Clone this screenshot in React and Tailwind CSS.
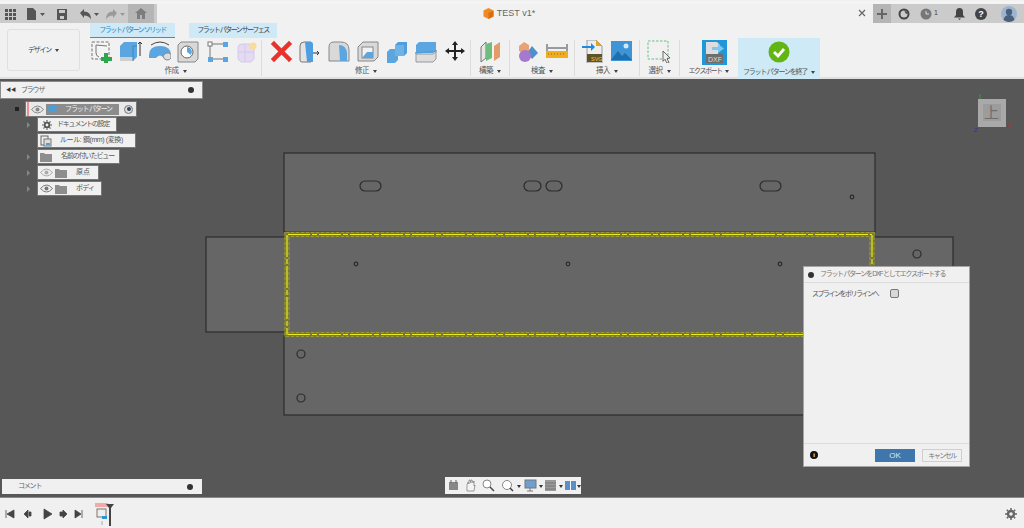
import React from 'react';

const Caret = () => <span className="inline-block ml-[4px] align-middle border-x-[2px] border-t-[3px] border-x-transparent border-t-[#444]" />;

// リボンのアイコン
const ribbonIcons = {
  sketch: <><rect x="2" y="2" width="17" height="17" fill="#f4f4f4" stroke="#777" strokeDasharray="3 1.5" /><path d="M6 5v8q0 3 3 4" fill="none" stroke="#777" /><path d="M6 5l11 1" stroke="#777" /><path d="M14 13h4v4h4v4h-4v2h-4v-2h-3v-4h3z" fill="#2aa84a" /></>,
  box: <><path d="M1 6l4-4h13v15l-4 4H1z" fill="#5ba6e0" /><path d="M1 17h13v4H1z" fill="#cfcfcf" /><path d="M14 6h4M14 6v15" stroke="#3f86c0" /><path d="M21 16V2m-2 2l2-2 2 2" stroke="#333" fill="none" /></>,
  bend: <><path d="M1 15q0-9 11-9t11 9v3h-7q-4-5-8 0H1z" fill="#5ba6e0" /><path d="M15 16q3-5 8-2v4q-1 2-4 2t-4-4z" fill="#ddd" stroke="#888" /><path d="M3 5q9-6 18 0" fill="none" stroke="#444" /></>,
  hole: <><path d="M1 5l3-3h17v17l-3 3H1z" fill="#d8d8d8" stroke="#888" /><circle cx="10" cy="12" r="6" fill="#fff" stroke="#666" /><path d="M10 12V7a5 5 0 0 1 4 8z" fill="#5ba6e0" /></>,
  nodes: <><path d="M5 4h13M5 19h13M4 5v13" stroke="#777" /><rect x="2" y="2" width="4" height="4" fill="#fff" stroke="#777" /><rect x="17" y="2" width="5" height="5" fill="#5ba6e0" /><rect x="2" y="17" width="5" height="5" fill="#5ba6e0" /><rect x="17" y="17" width="5" height="5" fill="#5ba6e0" /></>,
  form: <><path d="M3 8q0-4 4-4h8l4 4v11l-3 3H6l-3-3z" fill="#e4daf2" stroke="#d5c9ea" /><path d="M10 4v18M3 12h16" stroke="#d5c9ea" /><circle cx="18" cy="6" r="3.500" fill="#f7dc9a" /></>,
  del: <path d="M4 4l15 15M19 4L4 19" stroke="#e8322c" strokeWidth="4.500" strokeLinecap="square" />,
  press: <><path d="M1 6q0-4 4-4h7v20H3q-2 0-2-2z" fill="#e4e4e4" stroke="#777" /><path d="M6 2h6q2 0 2 2v18H8z" fill="#4f9fe0" /><path d="M14 13h6m-2-2l2 2-2 2" stroke="#333" fill="none" /></>,
  fillet: <><path d="M1 21V7q0-5 5-5h7q8 0 8 8v11z" fill="#d9d9d9" stroke="#888" /><path d="M11 5q7 0 8 8v8h-7z" fill="#5ba6e0" /></>,
  shell: <><path d="M1 7l5-5h15v15l-4 4H1z" fill="#d9d9d9" stroke="#888" /><rect x="5" y="7" width="11" height="11" fill="#f2f2f2" stroke="#888" /><path d="M5 18l5-6h6v6z" fill="#5ba6e0" /></>,
  combine: <><path d="M1 12l3-3h8v11l-3 3H1z" fill="#5ba6e0" /><path d="M9 5l3-3h9v11l-3 3H9z" fill="#4f9fe0" /><path d="M9 5h9v11H9z" fill="#6eb2e6" /></>,
  split: <><path d="M1 5l3-3h17v9l-3 2H1z" fill="#5ba6e0" /><path d="M1 14h17l3-2v7l-3 3H1z" fill="#ddd" stroke="#999" /><path d="M0 13l22-2" stroke="#4f9fe0" strokeWidth="1.400" /></>,
  move: <path d="M11 1l3 4h-2v5h5V8l4 3-4 3v-2h-5v5h2l-3 4-3-4h2v-5H5v2l-4-3 4-3v2h5V5H8z" fill="#222" />,
  plane: <><path d="M2 7l5-5v16l-5 4z" fill="#e6e6e6" stroke="#777" /><path d="M7 4l6-2v16l-6 3z" fill="#6fbd7d" /><path d="M15 6l6-4v15l-6 4z" fill="#e59a6a" /></>,
  inspect: <><path d="M2 6l5-4 5 3v6l-5 3-5-3z" fill="#e9a273" /><path d="M15 6l6 7-6 6-5-6z" fill="#4f8fcb" /><circle cx="8" cy="16" r="6" fill="#a579cf" /></>,
  measure: <><path d="M1 4v8M21 4v8M2 8h18" stroke="#444" /><rect x="0" y="11" width="22" height="7" fill="#f0ad1e" /><path d="M2 14h18" stroke="#8b6a10" strokeDasharray="1 2" /></>,
  svg: <><path d="M5 0h9l6 6v17H5z" fill="#eee" stroke="#999" /><path d="M14 0l6 6h-6z" fill="#e8a31a" /><rect x="5" y="14" width="15" height="8" fill="#5f5321" /><text x="9" y="21" fontSize="5.500" fill="#eec35a">SVG</text><path d="M0 6h9V3l4 4-4 4V8H0z" fill="#1f8ae0" /></>,
  image: <><rect x="0" y="1" width="21" height="20" fill="#3f94d6" /><circle cx="15" cy="6" r="2.500" fill="#cfe9f8" /><path d="M0 20l7-9 4 5 3-3 7 7z" fill="#1d6fae" /></>,
  select: <><rect x="1" y="1" width="20" height="18" fill="none" stroke="#67c184" strokeDasharray="2.500 1.500" /><path d="M16 11l7 7-3 .5 2 4-2 .8-2-4-2 2z" fill="#eee" stroke="#333" strokeWidth=".7" /></>,
};

const ribbonGroups = [
  { label: '作成', width: 172, pad: 'pl-[0px]', gap: 'gap-[6px]', icons: ['sketch', 'box', 'bend', 'hole', 'nodes', 'form'] },
  { label: '修正', width: 209, pad: 'pl-[8px]', gap: 'gap-[6px]', icons: ['del', 'press', 'fillet', 'shell', 'combine', 'split', 'move'] },
  { label: '構築', width: 39, pad: 'pl-[8px]', gap: 'gap-0', icons: ['plane'] },
  { label: '検査', width: 65, pad: 'pl-[7px]', gap: 'gap-[6px]', icons: ['inspect', 'measure'] },
  { label: '挿入', width: 65, pad: 'pl-[7px]', gap: 'gap-[6px]', icons: ['svg', 'image'] },
  { label: '選択', width: 40, pad: 'pl-[7px]', gap: 'gap-0', icons: ['select'] },
];

const RibbonGroup = ({ group }) => (
  <div className="flex flex-col h-[36px] border-r border-[#dcdcdc] shrink-0" style={{ width: group.width }}>
    <div className={`flex items-start h-[25px] ${group.pad} ${group.gap}`}>
      {group.icons.map((name) => (
        <svg key={name} width="23" height="23" viewBox="0 0 23 23" className="shrink-0 tracking-normal">{ribbonIcons[name]}</svg>
      ))}
    </div>
    <div className="text-[7.500px] tracking-[-0.5px] leading-[11px] text-center text-[#555] whitespace-nowrap">{group.label}<Caret /></div>
  </div>
);

const Eye = ({ color = '#777' }) => (
  <svg width="13" height="9" viewBox="0 0 13 9"><path d="M.5 4.500Q6.500-2.500 12.500 4.500 6.500 11.500.5 4.500z" fill="none" stroke={color} /><circle cx="6.500" cy="4.500" r="2" fill={color} /></svg>
);

const Folder = () => (
  <svg width="12" height="10" viewBox="0 0 12 10"><path d="M0 1h4l1 1h7v8H0z" fill="#8d8d8d" /></svg>
);

const Expander = () => <span className="w-0 h-0 border-y-[3px] border-l-[3px] border-y-transparent border-l-[#888]" />;

const TreeRow = ({ expander = true, width, children }) => (
  <div className="flex items-center h-[13px]">
    <div className="w-[12px] flex justify-start pl-[1px]">{expander && <Expander />}</div>
    <div className="flex items-center h-[13px] bg-[#f0f0f0] text-[7px] text-[#555] whitespace-nowrap shadow-[0_0_0_1px_#777]" style={{ width }}>{children}</div>
  </div>
);

const Canvas = () => (
  <svg viewBox="0 79 1024 418" className="absolute inset-0 w-full h-full tracking-normal">
    <g fill="#666666" stroke="#2c2c2c" strokeWidth="1.200">
      <rect x="206" y="237" width="80" height="95" />
      <rect x="870" y="237" width="83" height="95" />
      <rect x="284" y="153" width="591" height="79" />
      <rect x="284" y="336" width="591" height="79" />
    </g>
    <rect x="286" y="233" width="587" height="102" fill="#666666" />
    <g fill="none" stroke="#77773c" strokeWidth="5.500">
      <path d="M286 234.500H875M286 334.500H875M287 232V337M872 232V337" />
    </g>
    <g fill="none" stroke="#98983a" strokeWidth="1" strokeDasharray="3 2">
      <path d="M286 232.500H875M286 236.500H875M286 332.500H875M286 336.500H875" />
      <path d="M285 232V337M289 232V337M870 232V337M874 232V337" />
    </g>
    <g fill="none" stroke="#eaea1e" strokeWidth="1.200" strokeDasharray="22 2 5 2">
      <path d="M288 234.500H872M288 334.500H872" />
      <path d="M287 235V335M872 235V335" />
    </g>
    <g fill="none" stroke="#2c2c2c" strokeWidth="1.200">
      <rect x="360" y="181" width="21" height="10" rx="5" />
      <rect x="524" y="181" width="17" height="10" rx="5" />
      <rect x="546" y="181" width="16" height="10" rx="5" />
      <rect x="760" y="181" width="21" height="10" rx="5" />
      <circle cx="852" cy="197" r="1.800" />
      <circle cx="356" cy="264" r="1.800" />
      <circle cx="568" cy="264" r="1.800" />
      <circle cx="780" cy="264" r="1.800" />
      <circle cx="917" cy="254" r="4" />
      <circle cx="301" cy="354" r="4" />
      <circle cx="301" cy="398" r="4" />
    </g>
    <path d="M980 100V94" stroke="#3c9a3c" />
    <rect x="978" y="99" width="28" height="28" fill="#a9a9a9" />
    <rect x="983" y="104" width="18" height="17" fill="#9c9c9c" />
    <text x="984" y="118" fontSize="15" fill="#6e6e6e" fontFamily="'Noto Sans CJK JP'">上</text>
    <text x="1007" y="128" fontSize="6" fill="#b03030" fontFamily="'Liberation Sans'">X</text>
    <text x="974" y="132" fontSize="6" fill="#3030b0" fontFamily="'Liberation Sans'">Z</text>
  </svg>
);

const App = () => {
  return (
    <div className="w-[1024px] h-[528px] overflow-hidden flex flex-col bg-[#f0f0f0] tracking-[-1.5px] font-['Liberation_Sans','Noto_Sans_CJK_JP',sans-serif]">
      {/* タイトルバー */}
      <div className="h-[22px] mt-[1px] pt-[3px] bg-[#cbcbcb] shadow-[inset_0_3px_0_#f4f4f4] flex items-stretch shrink-0">
        <div className="w-[128px] flex items-center relative">
          <svg width="124" height="14" viewBox="0 0 124 14" className="ml-[4px]">
            <path d="M1 2h3v3H1zM5 2h3v3H5zM9 2h3v3H9zM1 6h3v3H1zM5 6h3v3H5zM9 6h3v3H9zM1 10h3v3H1zM5 10h3v3H5zM9 10h3v3H9z" fill="#555" />
            <path d="M23 1h6l3 3v9h-9z" fill="#555" /><path d="M36 6h5l-2.500 3z" fill="#555" />
            <path d="M53 2h10v11H53z" fill="#555" /><path d="M55 3h6v3h-6zM56 9h4v3h-4z" fill="#cbcbcb" />
            <path d="M76 6l4-4v2.500q7 0 7 8-2-4-7-4V11z" fill="#555" /><path d="M90 6h5l-2.500 3z" fill="#555" />
            <path d="M115 6l-4-4v2.500q-7 0-7 8 2-4 7-4V11z" fill="#999" transform="translate(-2 0)" /><path d="M116 6h5l-2.500 3z" fill="#999" />
          </svg>
        </div>
        <div className="w-[26px] bg-[#b5b5b5] flex items-center justify-center">
          <svg width="12" height="11" viewBox="0 0 12 11"><path d="M6 0l6 5h-2v6H7V7H5v4H2V5H0z" fill="#7d7d7d" /></svg>
        </div>
        <div className="w-[3px]" />
        <div className="w-[716px] bg-[#f1f1f1] flex items-center justify-center relative text-[9px] tracking-normal text-[#666]">
          <div className="flex items-center gap-[3px] -ml-[12px]">
            <svg width="11" height="11" viewBox="0 0 11 11"><path d="M5.500 0L10.500 2.500V8.500L5.500 11 .5 8.500V2.500z" fill="#f08a24" /><path d="M5.500 5L10.500 2.500V8.500L5.500 11z" fill="#d96f10" /></svg>
            <span>TEST v1*</span>
          </div>
          <svg width="8" height="8" viewBox="0 0 8 8" className="absolute right-[7px] top-[5px]"><path d="M1 1l6 6M7 1L1 7" stroke="#666" strokeWidth="1.200" /></svg>
        </div>
        <div className="w-[18px] bg-[#b5b5b5] flex items-center justify-center">
          <svg width="10" height="10" viewBox="0 0 10 10"><path d="M5 0v10M0 5h10" stroke="#666" strokeWidth="2" /></svg>
        </div>
        <div className="flex-1 flex items-center pl-[7px]">
          <svg width="12" height="12" viewBox="0 0 12 12"><circle cx="6" cy="6" r="4.500" fill="none" stroke="#444" strokeWidth="2" /><path d="M6 2l4 3-2 1z" fill="#444" /></svg>
          <svg width="12" height="12" viewBox="0 0 12 12" className="ml-[10px]"><circle cx="6" cy="6" r="5.500" fill="#777" /><path d="M6 3v3h3" stroke="#ddd" fill="none" /></svg>
          <span className="text-[7px] tracking-normal text-[#444] ml-[2px]">1</span>
          <svg width="11" height="12" viewBox="0 0 11 12" className="ml-[16px]"><path d="M5.500 0q3.500 0 3.500 4v3l2 2.500H0L2 7V4q0-4 3.500-4zM4 10.500h3L5.500 12z" fill="#444" /></svg>
          <div className="ml-[10px] w-[12px] h-[12px] rounded-full bg-[#444] text-white text-[9px] tracking-normal font-bold leading-[12px] text-center">?</div>
          <svg width="16" height="16" viewBox="0 0 16 16" className="ml-[14px]"><circle cx="8" cy="8" r="8" fill="#9db4cf" /><circle cx="8" cy="6" r="3.200" fill="#4a5f7c" /><path d="M2.500 14q1-5 5.500-5t5.500 5q-5.500 4-11 0z" fill="#4a5f7c" /></svg>
        </div>
      </div>

      {/* リボン */}
      <div className="h-[56px] shrink-0 flex relative bg-[#f1f1f1] border-b-[2px] border-[#e0e0e0]">
        <div className="w-[73px] h-[42px] ml-[7px] mt-[6px] border border-[#dfdfdf] rounded-[3px] flex items-center justify-center text-[7px] tracking-[-1.2px] text-[#444] shrink-0">デザイン<Caret /></div>
        <div className="ml-[10px] flex flex-col">
          <div className="flex h-[15px] text-[7px] leading-[14px] text-[#444] whitespace-nowrap">
            <div className="w-[85px] text-center text-[#2c86c4] bg-[#cfe9f6] border-b-[1.500px] border-[#2d93d6]">フラット パターン ソリッド</div>
            <div className="w-[88px] ml-[14px] text-center bg-[#cfe9f6]">フラット パターン サーフェス</div>
          </div>
          <div className="flex mt-[2px]">
            {ribbonGroups.map((group) => <RibbonGroup key={group.label} group={group} />)}
            <div className="w-[58px] h-[38px] flex flex-col items-center shrink-0 pl-[10px]">
              <svg width="26" height="26" viewBox="0 0 26 26" className="tracking-normal">
                <rect x="1" y="0" width="25" height="25" fill="#1f97d8" />
                <path d="M5 2h11l3 3v4h-2v5h2v9H5z" fill="#ddd" />
                <rect x="5" y="14" width="17" height="9" fill="#6d6d6d" />
                <text x="7" y="21.500" fontSize="7" fill="#ddd" fontFamily="'Liberation Sans'">DXF</text>
                <path d="M11 7h6V4l6 4.500-6 4.500v-3h-6z" fill="#7cc6f2" />
              </svg>
              <div className="text-[7px] leading-[11px] text-[#555] -mt-[1px] -ml-[10px] whitespace-nowrap">エクスポート<Caret /></div>
            </div>
            <div className="w-[82px] h-[41px] -mt-[2px] bg-[#cdeaf6] flex flex-col items-center shrink-0">
              <svg width="22" height="22" viewBox="0 0 22 22" className="mt-[3px]"><circle cx="11" cy="11" r="10.500" fill="#63b512" /><path d="M6 11l4 4 6-7" fill="none" stroke="#fff" strokeWidth="2.800" /></svg>
              <div className="text-[7px] tracking-[-1.2px] leading-[11px] text-[#555] mt-[3px] whitespace-nowrap">フラット パターンを終了<Caret /></div>
            </div>
          </div>
        </div>
      </div>

      {/* キャンバス */}
      <div className="relative flex-1 bg-[#575757] border-b border-[#8a8a8a]">
        <Canvas />

        {/* ブラウザ */}
        <div className="absolute left-[1px] top-[3px] w-[201px]">
          <div className="h-[16px] bg-[#f0f0f0] flex items-center px-[5px] text-[7px] tracking-[-1.2px] text-[#666] shadow-[0_0_0_1px_#8a8a8a]">
            <span className="text-[5px] tracking-normal text-[#333] mr-[5px]">◀◀</span>
            <span className="flex-1">ブラウザ</span>
            <span className="w-[6px] h-[6px] mr-[3px] rounded-full bg-[#333]" />
          </div>
          <div className="mt-[4px] flex items-center h-[14px] ml-[14px]">
            <span className="w-[4px] h-[4px] bg-[#222] mr-[7px]" />
            <div className="w-[110px] h-[14px] bg-[#e9e9e9] flex items-center shadow-[0_0_0_1px_#777]">
              <span className="w-[2px] h-full bg-[#ef8f8f] ml-[1px]" />
              <span className="w-[17px] flex justify-center"><Eye color="#888" /></span>
              <div className="w-[73px] h-[11px] bg-[#8c8c8c] flex items-center text-[7px] tracking-[-1.2px] text-[#f0f0f0] whitespace-nowrap">
                <svg width="10" height="9" viewBox="0 0 10 9" className="ml-[2px]"><path d="M1 0v9M1 1h8L6 3.500 9 6H1z" fill="#4a9edb" stroke="#4a9edb" strokeWidth=".5" /></svg>
                <span className="flex-1 text-center">フラット パターン</span>
              </div>
              <span className="ml-[5px] w-[9px] h-[9px] rounded-full border border-[#777] bg-[#ddd] flex items-center justify-center"><span className="w-[4px] h-[4px] rounded-full bg-[#345]" /></span>
            </div>
          </div>
          <div className="mt-[2px] ml-[25px] flex flex-col gap-[3px]">
            <TreeRow width={78}>
              <svg width="10" height="10" viewBox="0 0 12 12" className="mx-[4px]"><circle cx="6" cy="6" r="2.800" fill="none" stroke="#555" strokeWidth="2.200" /><path d="M6 0v12M0 6h12M1.800 1.800l8.400 8.400M10.200 1.800l-8.400 8.400" stroke="#555" strokeWidth="1.300" strokeDasharray="2 8" /></svg>
              <span className="ml-[1px] tracking-[-1.2px]">ドキュメントの設定</span>
            </TreeRow>
            <TreeRow expander={false} width={97}>
              <svg width="12" height="12" viewBox="0 0 12 12" className="mx-[2px]"><rect x="1" y="1" width="7" height="9" fill="#eee" stroke="#666" /><rect x="4" y="4" width="7" height="7" fill="#ddd" stroke="#777" /><rect x="6" y="8" width="4" height="2" fill="#4a9edb" /></svg>
              <span className="ml-[6px] tracking-[-0.4px]">ルール: 鋼(mm) (変換)</span>
            </TreeRow>
            <TreeRow width={81}>
              <span className="mx-[2px]"><Folder /></span>
              <span className="ml-[7px] tracking-[-1.1px]">名前の付いたビュー</span>
            </TreeRow>
            <TreeRow width={60}>
              <span className="w-[17px] flex justify-center"><Eye color="#aaa" /></span>
              <Folder />
              <span className="ml-[9px] tracking-normal">原点</span>
            </TreeRow>
            <TreeRow width={63}>
              <span className="w-[17px] flex justify-center"><Eye /></span>
              <Folder />
              <span className="ml-[9px] tracking-[-0.8px]">ボディ</span>
            </TreeRow>
          </div>
        </div>

        {/* コメント */}
        <div className="absolute left-[2px] top-[400px] w-[200px] h-[15px] bg-[#f0f0f0] flex items-center pl-[16px] pr-[9px] text-[7px] tracking-[-1.2px] text-[#666]">
          <span className="flex-1">コメント</span>
          <span className="w-[6px] h-[6px] rounded-full bg-[#333]" />
        </div>

        {/* ナビゲーションバー */}
        <div className="absolute left-[445px] top-[398px] w-[136px] h-[17px] bg-[#f0f0f0] flex items-center pl-[2px]">
          <svg width="134" height="13" viewBox="0 0 134 13">
            <path d="M2 3h9v8H2z" fill="#888" /><path d="M4 1v3M9 1v3" stroke="#666" />
            <path d="M20 12V6l1-3 1 2V1h1l1 3V1h1l1 3 1-2v5l1-1-1 6z" fill="#f4f4f4" stroke="#777" strokeWidth=".7" />
            <circle cx="40" cy="5" r="4" fill="#fff" stroke="#888" /><path d="M43 8l4 4" stroke="#444" strokeWidth="1.500" />
            <circle cx="60" cy="6" r="4.500" fill="#fff" stroke="#888" /><path d="M63 9l3 3" stroke="#444" strokeWidth="1.500" /><path d="M70 6h4l-2 3z" fill="#333" />
            <rect x="78" y="1" width="11" height="8" fill="#6f9ed0" stroke="#777" /><path d="M83 9v3M80 12h6" stroke="#777" /><path d="M92 6h4l-2 3z" fill="#333" />
            <rect x="98" y="1" width="11" height="11" fill="#9a9a9a" /><path d="M98 4h11M98 7h11M98 10h11" stroke="#777" /><path d="M112 6h4l-2 3z" fill="#333" />
            <rect x="118" y="2" width="11" height="9" fill="#5b8fc9" /><path d="M123.500 2v9" stroke="#fff" /><path d="M130 6h4l-2 3z" fill="#333" />
          </svg>
        </div>

        {/* DXF エクスポートダイアログ */}
        <div className="absolute left-[803px] top-[187px] w-[167px] h-[201px] bg-[#f0f0f0] border border-[#a5a5a5] flex flex-col text-[7px] text-[#555] whitespace-nowrap">
          <div className="h-[16px] flex items-center px-[4px] border-b border-[#dcdcdc] shrink-0">
            <span className="w-[6px] h-[6px] rounded-full bg-[#333] mr-[6px]" />
            <span className="text-[#777] tracking-[-1.300px]">フラット パターンを DXF としてエクスポートする</span>
          </div>
          <div className="flex-1 flex items-start pl-[8px] pt-[4px]">
            <span className="w-[69px] leading-[13px]">スプラインをポリラインへ</span>
            <span className="w-[9px] h-[9px] ml-[9px] mt-[2px] rounded-[2px] border border-[#777] bg-[#d8d8d8]" />
          </div>
          <div className="h-[23px] border-t border-[#dcdcdc] flex items-center pl-[6px] shrink-0">
            <span className="w-[8px] h-[8px] rounded-full bg-[#111] text-white text-[6px] tracking-normal font-bold leading-[8px] text-center">i</span>
            <span className="w-[40px] h-[13px] ml-[57px] bg-[#3f76ac] text-[#dce8f3] text-[8px] tracking-normal leading-[13px] text-center">OK</span>
            <span className="w-[40px] h-[13px] ml-[7px] border border-[#cfcfcf] text-[#777] leading-[11px] text-center">キャンセル</span>
          </div>
        </div>
      </div>

      {/* タイムライン */}
      <div className="h-[30px] shrink-0 flex items-start relative">
        <svg width="120" height="25" viewBox="0 0 120 25" className="ml-[5px] mt-[5px] shrink-0">
          <path d="M1 7v8M9 7v8L2 11zM19 11l4-4v8zM24 9h2v4h-2zM39 6l8 5-8 5zM55 9h3v4h-3zM58 7l4 4-4 4zM70 7l6 4-6 4zM77 7v8" fill="#444" stroke="#444" strokeWidth=".8" />
          <rect x="90" y="0" width="13" height="4" fill="#f4a9a9" />
          <rect x="92" y="6" width="9" height="8" fill="#eee" stroke="#777" />
          <rect x="97" y="13" width="5" height="3" fill="#2d93d6" />
          <path d="M97 18v4" stroke="#aaa" />
          <path d="M101 1h8l-3 4v18h-2V5z" fill="#444" />
        </svg>
        <svg width="12" height="12" viewBox="0 0 12 12" className="absolute right-[7px] top-[10px]"><circle cx="6" cy="6" r="3" fill="none" stroke="#666" strokeWidth="2.400" /><path d="M6 0v12M0 6h12M1.800 1.800l8.400 8.400M10.200 1.800l-8.400 8.400" stroke="#666" strokeWidth="1.500" strokeDasharray="2 8" /></svg>
      </div>
    </div>
  );
};

export default App;
